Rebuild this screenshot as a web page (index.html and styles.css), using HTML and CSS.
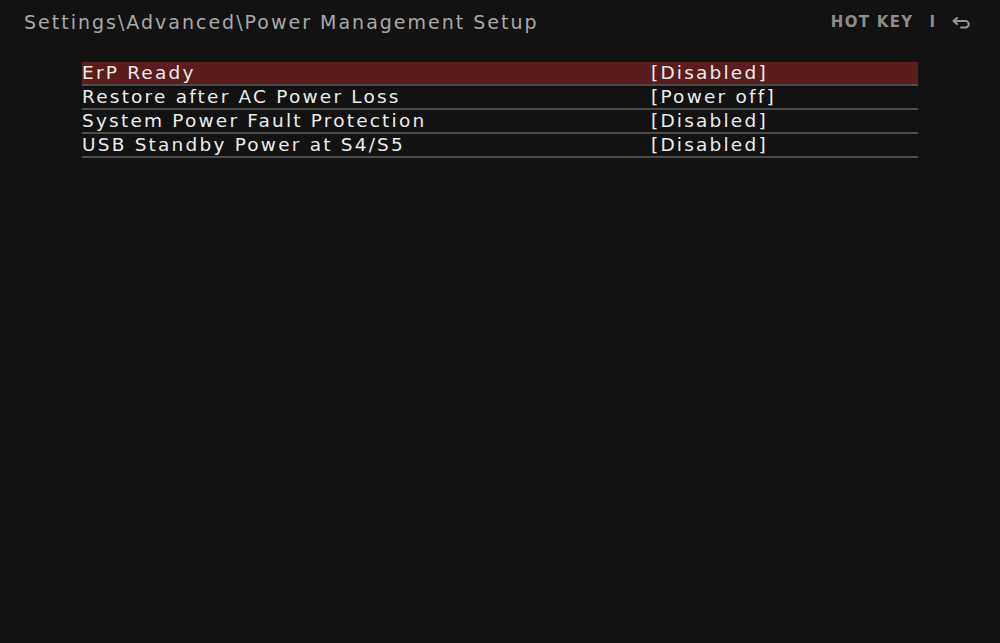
FILE: index.html
```html
<!DOCTYPE html>
<html>
<head>
<meta charset="utf-8">
<link rel="stylesheet" href="styles.css">
</head>
<body>
<div class="screen">
  <header class="topbar">
    <div class="path">Settings\Advanced\Power Management Setup</div>
    <div class="hotkeys">
      <span class="hotkey">HOT KEY</span>
      <span class="sep">I</span>
      <svg class="back" width="19" height="12" viewBox="0 0 19 12">
        <path d="M5 1 L1.5 4 L5 7" fill="none" stroke="#959595" stroke-width="2" stroke-linecap="round" stroke-linejoin="round"/>
        <path d="M2 4 H13.5 A3.2 3.2 0 0 1 13.5 10.5 H9" fill="none" stroke="#959595" stroke-width="2" stroke-linecap="round"/>
      </svg>
    </div>
  </header>
  <main class="list">
    <div class="row active"><span class="label">ErP Ready</span><span class="value">[Disabled]</span></div>
    <div class="row"><span class="label">Restore after AC Power Loss</span><span class="value">[Power off]</span></div>
    <div class="row"><span class="label">System Power Fault Protection</span><span class="value">[Disabled]</span></div>
    <div class="row"><span class="label">USB Standby Power at S4/S5</span><span class="value">[Disabled]</span></div>
  </main>
</div>
</body>
</html>
```

FILE: styles.css
```css
html, body {
  margin: 0;
  padding: 0;
  background: #121212;
}
.screen {
  width: 1000px;
  height: 643px;
  background: #121212;
  font-family: "DejaVu Sans", "Liberation Sans", sans-serif;
  color: #e6e6e6;
}
.topbar {
  display: flex;
  justify-content: space-between;
  align-items: center;
  padding: 10px 29px 0 24px;
  height: 24px;
}
.path {
  font-size: 19px;
  color: #a8a8a8;
  letter-spacing: 2px;
}
.hotkeys {
  display: flex;
  align-items: center;
  color: #8c8c8c;
  font-size: 15px;
  font-weight: bold;
}
.hotkey {
  letter-spacing: 1.3px;
}
.sep {
  margin-left: 16px;
  margin-right: 17px;
}
.back {
  display: block;
  margin-top: 1px;
}
.list {
  margin: 28px 82px 0 82px;
}
.row {
  display: flex;
  height: 22px;
  padding-bottom: 0;
  align-items: center;
  border-bottom: 2px solid #4a4a4a;
  font-size: 18.5px;
  line-height: 18px;
  letter-spacing: 2.2px;
  color: #ececec;
}
.row.active {
  background: #5a1c1c;
}
.label {
  width: 569px;
}
.value {
  flex: 1;
}
```
